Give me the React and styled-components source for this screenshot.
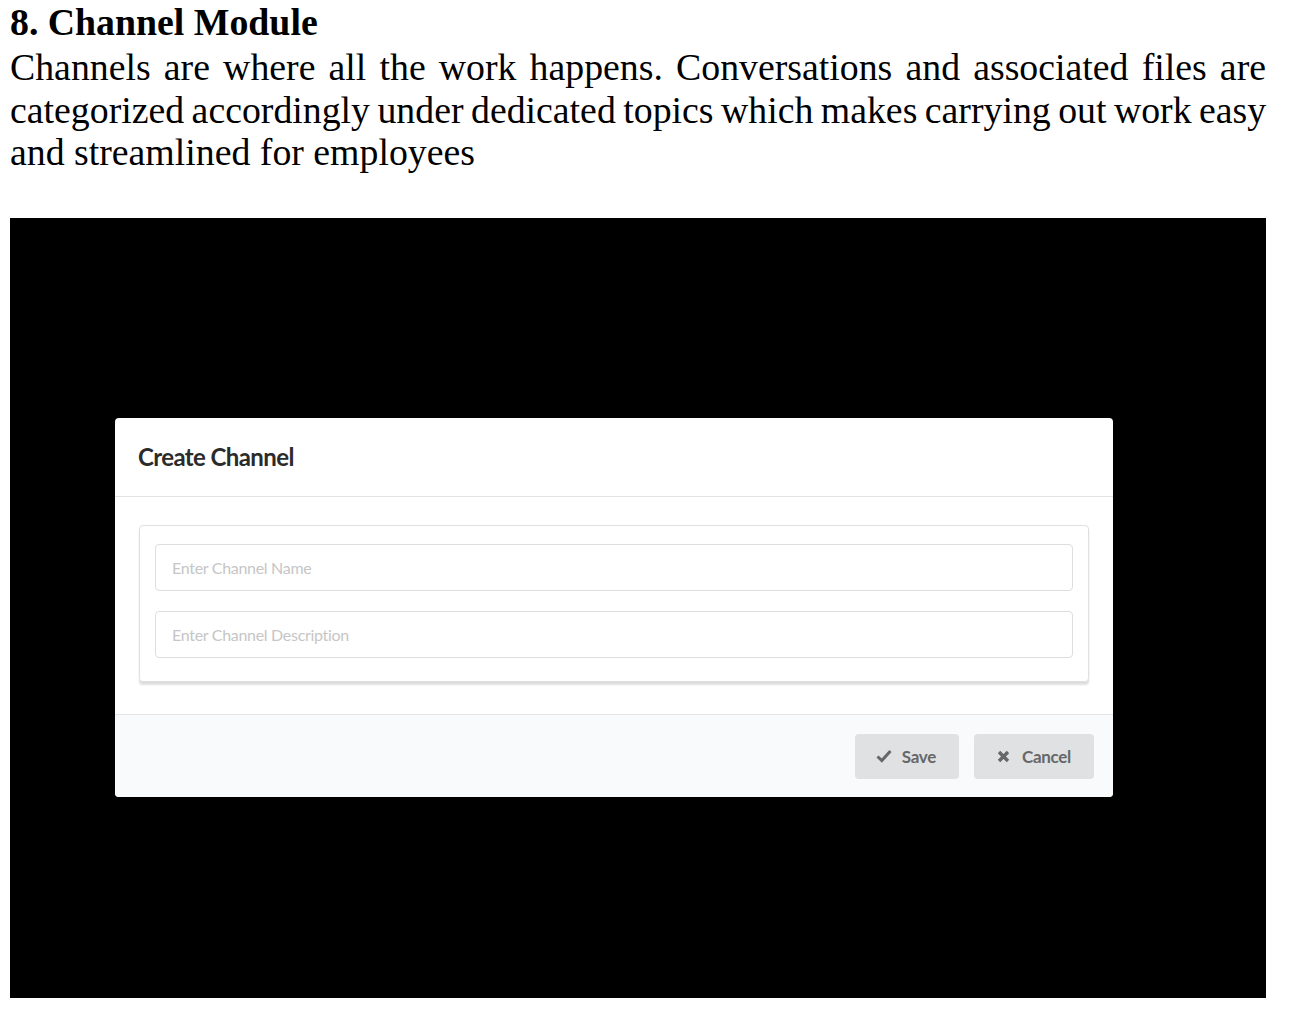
import React from 'react'
import styled, { createGlobalStyle } from 'styled-components'

const GlobalStyle = createGlobalStyle`
    html, body {
        margin: 0;
        padding: 0;
        background: #ffffff;
    }
`

const lines = [
    'Channels are where all the work happens. Conversations and associated files are',
    'categorized accordingly under dedicated topics which makes carrying out work easy',
    'and streamlined for employees',
]

const CheckIcon = () => (
    <svg width="16" height="14" viewBox="0 0 16 14">
        <polyline points="1.5,7.5 5.8,11.5 14.5,2" fill="none" stroke="currentColor" strokeWidth="3" />
    </svg>
)

const CrossIcon = () => (
    <svg width="13" height="13" viewBox="0 0 13 13">
        <path d="M2 2 L11 11 M11 2 L2 11" fill="none" stroke="currentColor" strokeWidth="3.4" />
    </svg>
)

const App = () => {
    return (
        <S.Page>
            <GlobalStyle />
            <S.Title>8. Channel Module</S.Title>
            <S.Text>
                {lines.map((line, i) => (
                    <S.Line key={i} $last={i === lines.length - 1}>
                        {line}
                    </S.Line>
                ))}
            </S.Text>
            <S.Screen>
                <S.Modal>
                    <S.ModalHeader>Create Channel</S.ModalHeader>
                    <S.ModalContent>
                        <S.Segment>
                            <S.Input placeholder="Enter Channel Name" />
                            <S.Input placeholder="Enter Channel Description" />
                        </S.Segment>
                    </S.ModalContent>
                    <S.Actions>
                        <S.Button $left={21} $gap={10}>
                            <CheckIcon />
                            Save
                        </S.Button>
                        <S.Button $left={23} $gap={12}>
                            <CrossIcon />
                            Cancel
                        </S.Button>
                    </S.Actions>
                </S.Modal>
            </S.Screen>
        </S.Page>
    )
}

const S = {
    Page: styled.div`
        width: 1256px;
        padding: 0 0 0 10px;
        font-family: 'Liberation Serif', 'Times New Roman', serif;
        color: #000;
    `,
    Title: styled.div`
        font-size: 37.8px;
        line-height: 44px;
        font-weight: 700;
    `,
    Text: styled.div`
        margin: 2px 0 0;
        font-size: 37.8px;
        line-height: 42.5px;
    `,
    Line: styled.span`
        display: block;
        white-space: nowrap;
        text-align: ${({ $last }) => ($last ? 'left' : 'justify')};
        text-align-last: ${({ $last }) => ($last ? 'left' : 'justify')};
        word-spacing: ${({ $last }) => ($last ? '0' : '-2px')};
    `,
    Screen: styled.div`
        margin-top: 44px;
        height: 780px;
        background: #000;
        padding: 200px 0 0 105px;
        box-sizing: border-box;
    `,
    Modal: styled.div`
        width: 998px;
        background: #fff;
        border-radius: 4px;
        overflow: hidden;
        font-family: 'Lato', 'Liberation Sans', sans-serif;
    `,
    ModalHeader: styled.div`
        height: 78px;
        display: flex;
        align-items: center;
        padding: 0 23px;
        border-bottom: 1px solid #e3e3e4;
        font-size: 24px;
        font-weight: 700;
        letter-spacing: -0.6px;
        color: #2b2b2b;
    `,
    ModalContent: styled.div`
        padding: 28px 24px 32px 24px;
    `,
    Segment: styled.div`
        display: flex;
        flex-direction: column;
        gap: 20px;
        padding: 18px 15px 23px;
        border: 1px solid #e0e0e1;
        border-radius: 4px;
        box-shadow: 0 1px 0 #dadada, 0 3px 2px rgba(34, 36, 38, 0.14);
    `,
    Input: styled.input`
        height: 47px;
        box-sizing: border-box;
        border: 1px solid #dedede;
        border-radius: 4px;
        padding: 0 16px;
        font-family: 'Lato', 'Liberation Sans', sans-serif;
        font-size: 16px;
        letter-spacing: -0.3px;
        outline: none;
        &::placeholder {
            color: #c6c6c6;
        }
    `,
    Actions: styled.div`
        display: flex;
        justify-content: flex-end;
        gap: 15px;
        padding: 19px 19px 18px;
        border-top: 1px solid #e4e4e5;
        background: #f9fafb;
    `,
    Button: styled.button`
        display: flex;
        align-items: center;
        gap: ${({ $gap }) => $gap}px;
        height: 45px;
        padding: 0 23px 0 ${({ $left }) => $left}px;
        border: none;
        border-radius: 4px;
        background: #e0e1e2;
        color: #666768;
        font-family: 'Lato', 'Liberation Sans', sans-serif;
        font-size: 17px;
        font-weight: 700;
        letter-spacing: -0.3px;
    `,
}

export default App
